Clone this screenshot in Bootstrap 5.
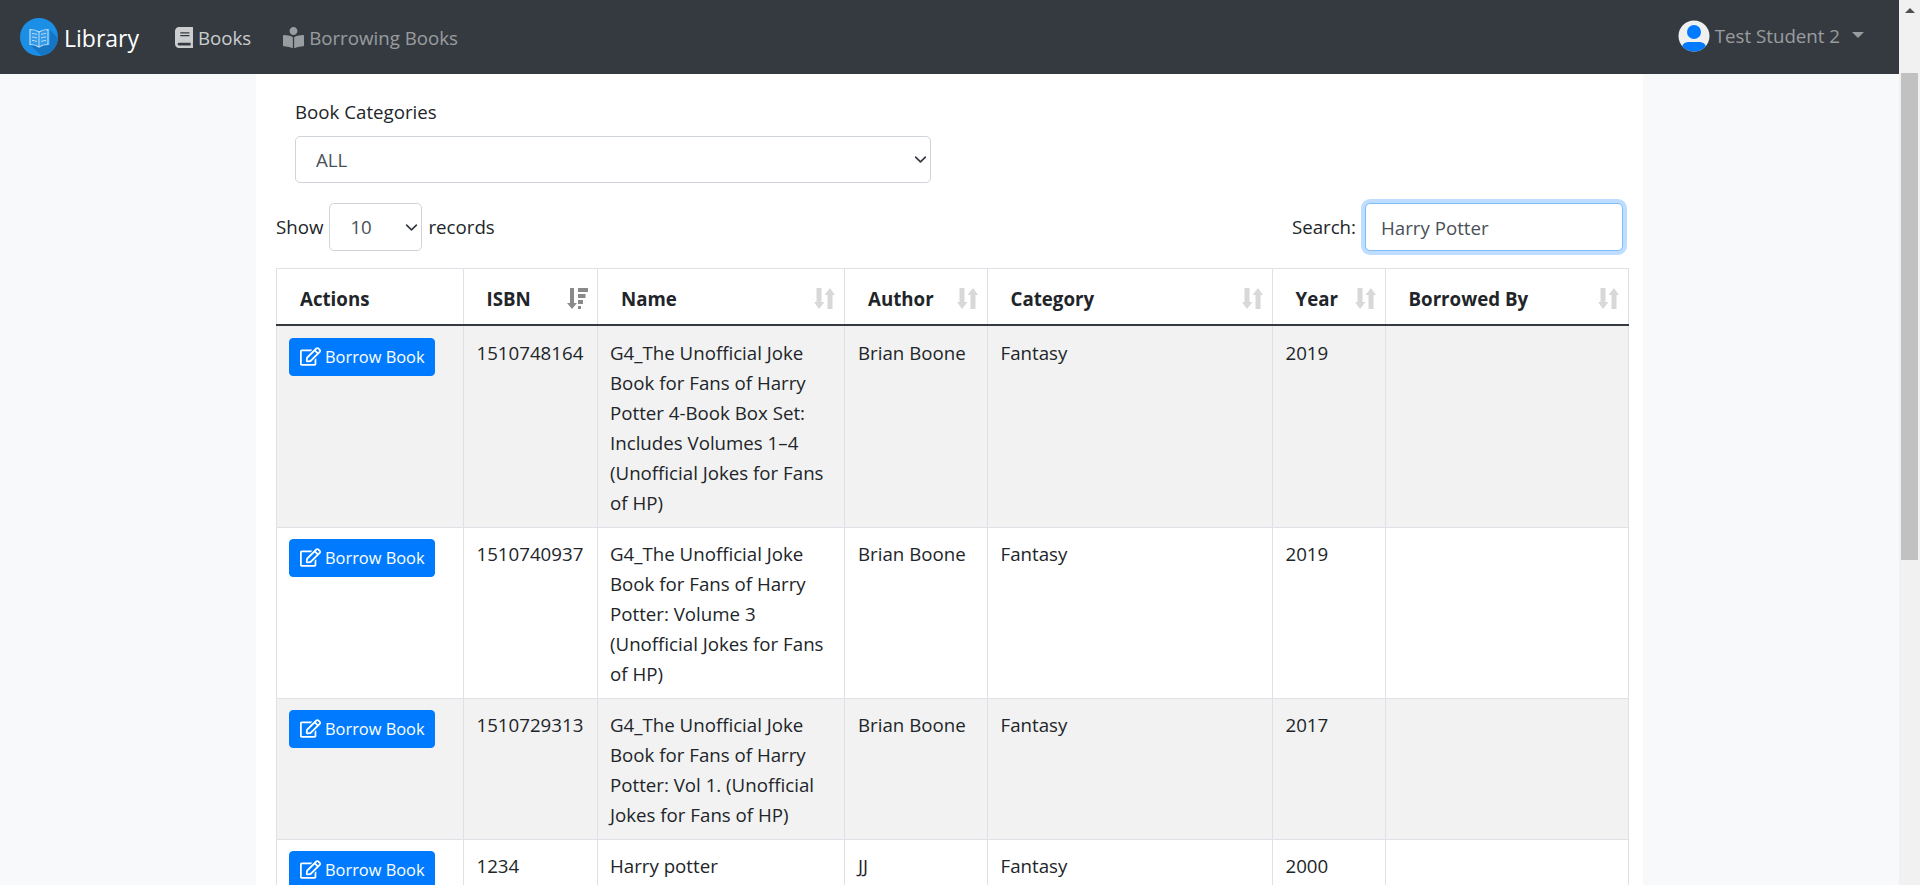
<!DOCTYPE html>
<html>
  <head>
    <title>Library</title>
    <link href="https://cdn.jsdelivr.net/npm/bootstrap@5.3.0/dist/css/bootstrap.min.css" rel="stylesheet">
    <style>
      html { font-size: 20px; }
      body {
        background: #f8f9fa;
        color: #212529;
        font-family: "Open Sans", "Liberation Sans", sans-serif;
        font-size: 18.7px;
        line-height: 30px;
      }
      .app-shell { height: 100vh; overflow: hidden; }
      .app-main { min-width: 0; overflow: hidden; }

      /* navbar */
      .top-bar { background: #343a40; height: 74px; padding: 0 20px; }
      .brand-link { color: #fff; font-size: 23px; text-decoration: none; gap: 6px; margin-right: 35.500px; }
      .top-link { font-size: 18.7px; text-decoration: none; gap: 5px; margin-right: 32px; }
      .top-link.on { color: rgba(255, 255, 255, .75); }
      .top-link.off { color: rgba(255, 255, 255, .5); }
      .nav-txt { margin-top: 2px; }
      .user-link { color: rgba(255, 255, 255, .5); font-size: 18.7px; text-decoration: none; gap: 5px; margin-right: 15px; margin-top: -3px; }
      .user-caret { border-top: 6px solid rgba(255, 255, 255, .5); border-left: 6px solid transparent; border-right: 6px solid transparent; margin-left: 7px; margin-top: -2px; }
      .nav-ico { height: 21px; fill: currentColor; }

      /* page column */
      .page-sheet { background: #fff; width: 1387px; padding: 23px 14px 0 20px; }
      .cat-box { width: 636px; margin-left: 19px; margin-bottom: 20px; }
      .cat-box label { margin-bottom: 9px; display: block; }
      .field-plain {
        color: #495057;
        font-size: 18.7px;
        line-height: 30px;
        height: 47px;
        border-color: #ced4da;
        border-radius: 5px;
        padding-left: 20px;
      }
      .field-plain.form-select { background-size: 17px 13px; background-position: right 1px center; }
      .len-select { width: 93px; height: 48px; margin: 0 6px 0 6px; }
      .search-input {
        width: 258px;
        height: 48px;
        margin-left: 9px;
        margin-right: 6px;
        padding-left: 15px;
        border-color: #80bdff;
        box-shadow: 0 0 0 4px rgba(0, 123, 255, .25);
      }
      .tools-row { margin-bottom: 17px; }

      /* table */
      .books-table { table-layout: fixed; width: 1352px; margin: 0; border-top-width: 2px; }
      .books-table > * > * > * { border-color: #dee2e6; }
      .books-table th {
        font-weight: 700;
        color: #212529;
        padding: 14px 9px 10px 23px;
        border-bottom: 2px solid #343a40;
        height: 56px;
      }
      .books-table td { padding: 10.500px 13px 9.500px; color: #212529; }
      .books-table tbody tr:first-child td { padding-top: 12px; }
      .books-table td:first-child { padding-left: 12px; }
      .books-table td:nth-child(3) { padding-left: 12px; }
      .c-act { width: 186.5px; }
      .c-isbn { width: 134.5px; }
      .c-name { width: 247px; }
      .c-auth { width: 142.5px; }
      .c-cat { width: 285px; }
      .c-year { width: 113px; }
      .c-by { width: 243.5px; }
      .sort-ico { width: 21px; height: 21px; flex: none; }
      .sort-ico.idle { color: #d8d8d8; }
      .sort-ico.act { color: #8a8a8a; }
      .borrow-btn {
        background: #007bff;
        border-color: #007bff;
        color: #fff;
        font-size: 16.4px;
        line-height: 26px;
        padding: 5px 9px 5px 10px;
        border-radius: 4px;
        gap: 4px;
        display: inline-flex;
        align-items: center;
        white-space: nowrap;
      }
      .borrow-btn svg { width: 21px; height: 19px; fill: currentColor; }

      /* painted scrollbar, the shot has a classic one */
      .fake-scroll { width: 21px; flex: none; background: #f1f1f1; padding: 0 2px; }
      .fake-arrow { height: 21px; }
      .fake-arrow i { border-bottom: 5px solid #505050; border-left: 5px solid transparent; border-right: 5px solid transparent; }
      .fake-thumb { background: #c1c1c1; height: 487px; margin-top: 52px; }
    </style>
  </head>
  <body>
    <svg width="0" height="0" class="d-block">
      <symbol id="ico-edit" viewBox="0 0 576 512"><path d="M402.3 344.9l32-32c5-5 13.7-1.5 13.7 5.7V464c0 26.5-21.5 48-48 48H48c-26.5 0-48-21.5-48-48V112c0-26.5 21.5-48 48-48h273.5c7.1 0 10.7 8.6 5.7 13.7l-32 32c-1.5 1.5-3.5 2.3-5.7 2.3H48v352h352V350.5c0-2.1.8-4.1 2.3-5.6zm156.6-201.8L296.3 405.7l-90.4 10c-26.2 2.9-48.5-19.2-45.6-45.6l10-90.4L432.9 17.1c22.9-22.9 59.9-22.9 82.7 0l43.2 43.2c22.9 22.9 22.9 60 .1 82.8zM460.1 174L402 115.9 216.2 301.8l-7.3 65.3 65.3-7.3L460.1 174zm64.8-79.7l-43.2-43.2c-4.1-4.1-10.8-4.1-14.8 0L436 82l58.1 58.1 30.9-30.9c4-4.2 4-10.8-.1-14.9z"/></symbol>
      <symbol id="ico-sort" viewBox="0 0 21 21"><path fill="currentColor" d="M2.500 0h5v14h3L5 21 0 14h2.500zM13.500 21h5V7H21L16 0l-5.500 7h3z"/></symbol>
      <symbol id="ico-sorted" viewBox="0 0 21 21"><path fill="currentColor" d="M3 0h4v15h3L5 21 0 15h3zM11 0h10v4H11zM11 6h7.500v4H11zM11 12h5v4h-5zM11 18h3v3h-3z"/></symbol>
    </svg>

    <div class="app-shell d-flex">
      <div class="app-main flex-grow-1">
        <nav class="top-bar d-flex align-items-center">
          <a class="brand-link d-flex align-items-center" href="#">
            <svg width="38" height="38" viewBox="0 0 38 38">
              <defs><clipPath id="logo-clip"><circle cx="19" cy="19" r="19"/></clipPath></defs>
              <circle cx="19" cy="19" r="19" fill="#1b8fe6"/>
              <path clip-path="url(#logo-clip)" d="M10 27L30 27 30 12 40 22 40 40 24 40z" fill="#1776c4"/>
              <path d="M10 11.500c3.500 0 6.500.7 9 2.500 2.500-1.800 5.500-2.500 9-2.500v15c-3.500 0-6.500.7-9 2.500-2.500-1.800-5.500-2.500-9-2.500z" fill="#2f9bea" stroke="#bcdcf6" stroke-width="1.200"/>
              <path d="M19 14v15M12 15.500c1.700 0 3.400.3 5 1M12 19c1.700 0 3.400.3 5 1M12 22.500c1.700 0 3.400.3 5 1M26 15.500c-1.700 0-3.400.3-5 1M26 19c-1.700 0-3.400.3-5 1M26 22.500c-1.700 0-3.400.3-5 1" fill="none" stroke="#bcdcf6" stroke-width="1"/>
            </svg>
            <span class="nav-txt">Library</span>
          </a>
          <a class="top-link on d-flex align-items-center" href="#">
            <svg class="nav-ico" viewBox="0 0 448 512"><path d="M448 360V24c0-13.300-10.700-24-24-24H96C43 0 0 43 0 96v320c0 53 43 96 96 96h328c13.300 0 24-10.700 24-24v-16c0-7.500-3.500-14.300-8.900-18.700-4.200-15.400-4.200-59.300 0-74.700 5.400-4.300 8.900-11.100 8.900-18.600zM128 134c0-3.300 2.700-6 6-6h212c3.300 0 6 2.700 6 6v20c0 3.300-2.700 6-6 6H134c-3.300 0-6-2.700-6-6v-20zm0 64c0-3.300 2.700-6 6-6h212c3.300 0 6 2.700 6 6v20c0 3.300-2.700 6-6 6H134c-3.300 0-6-2.700-6-6v-20zm253.400 250H96c-17.700 0-32-14.300-32-32 0-17.600 14.400-32 32-32h285.400c-1.900 17.100-1.900 46.900 0 64z"/></svg>
            <span class="nav-txt">Books</span>
          </a>
          <a class="top-link off d-flex align-items-center" href="#">
            <svg class="nav-ico" viewBox="0 0 512 512"><path d="M352 96c0-53.020-42.980-96-96-96s-96 42.980-96 96 42.980 96 96 96 96-42.980 96-96zM233.590 241.100c-59.330-36.320-155.430-46.300-203.790-49.050C13.550 191.130 0 203.510 0 219.140v222.800c0 14.330 11.590 26.280 26.490 27.050 43.660 2.290 131.990 10.680 193.040 41.430 9.370 4.720 20.480-1.710 20.480-11.870V252.560c-.01-4.670-2.320-8.950-6.420-11.460zm248.610-49.050c-48.350 2.740-144.460 12.730-203.780 49.050-4.100 2.510-6.410 6.960-6.410 11.630v245.790c0 10.190 11.140 16.630 20.540 11.900 61.040-30.720 149.320-39.110 192.970-41.400 14.900-.78 26.490-12.730 26.490-27.060V219.140c-.01-15.630-13.560-28.010-29.810-27.090z"/></svg>
            <span class="nav-txt">Borrowing Books</span>
          </a>
          <a class="user-link d-flex align-items-center ms-auto" href="#">
            <svg width="32" height="32" viewBox="0 0 32 32">
              <defs><clipPath id="user-clip"><circle cx="16" cy="16" r="15.500"/></clipPath></defs>
              <circle cx="16" cy="16" r="15.500" fill="#f0f0f0"/>
              <circle cx="16" cy="12" r="7" fill="#007bff"/>
              <path clip-path="url(#user-clip)" d="M4 32v-4c0-4 3-6 7-6h10c4 0 7 2 7 6v4z" fill="#007bff"/>
            </svg>
            Test Student 2
            <span class="user-caret"></span>
          </a>
        </nav>

        <div class="page-sheet mx-auto">
          <div class="cat-box">
            <label for="catSelect">Book Categories</label>
            <select id="catSelect" class="form-select field-plain"><option>ALL</option></select>
          </div>

          <div class="tools-row d-flex align-items-center justify-content-between">
            <div class="d-flex align-items-center">
              Show
              <select class="form-select field-plain len-select"><option>10</option></select>
              records
            </div>
            <div class="d-flex align-items-center">
              Search:
              <input type="text" class="form-control field-plain search-input" value="Harry Potter">
            </div>
          </div>

          <table class="table table-bordered table-striped books-table">
            <colgroup>
              <col class="c-act"><col class="c-isbn"><col class="c-name"><col class="c-auth"><col class="c-cat"><col class="c-year"><col class="c-by">
            </colgroup>
            <thead>
              <tr>
                <th>Actions</th>
                <th><div class="d-flex justify-content-between align-items-center">ISBN <svg class="sort-ico act"><use href="#ico-sorted"/></svg></div></th>
                <th><div class="d-flex justify-content-between align-items-center">Name <svg class="sort-ico idle"><use href="#ico-sort"/></svg></div></th>
                <th><div class="d-flex justify-content-between align-items-center">Author <svg class="sort-ico idle"><use href="#ico-sort"/></svg></div></th>
                <th><div class="d-flex justify-content-between align-items-center">Category <svg class="sort-ico idle"><use href="#ico-sort"/></svg></div></th>
                <th><div class="d-flex justify-content-between align-items-center">Year <svg class="sort-ico idle"><use href="#ico-sort"/></svg></div></th>
                <th><div class="d-flex justify-content-between align-items-center">Borrowed By <svg class="sort-ico idle"><use href="#ico-sort"/></svg></div></th>
              </tr>
            </thead>
            <tbody>
              <tr>
                <td><a class="btn borrow-btn" href="#"><svg><use href="#ico-edit"/></svg>Borrow Book</a></td>
                <td>1510748164</td>
                <td>G4_The Unofficial Joke Book for Fans of Harry Potter 4-Book Box Set: Includes Volumes 1–4 (Unofficial Jokes for Fans of HP)</td>
                <td>Brian Boone</td>
                <td>Fantasy</td>
                <td>2019</td>
                <td></td>
              </tr>
              <tr>
                <td><a class="btn borrow-btn" href="#"><svg><use href="#ico-edit"/></svg>Borrow Book</a></td>
                <td>1510740937</td>
                <td>G4_The Unofficial Joke Book for Fans of Harry Potter: Volume 3 (Unofficial Jokes for Fans of HP)</td>
                <td>Brian Boone</td>
                <td>Fantasy</td>
                <td>2019</td>
                <td></td>
              </tr>
              <tr>
                <td><a class="btn borrow-btn" href="#"><svg><use href="#ico-edit"/></svg>Borrow Book</a></td>
                <td>1510729313</td>
                <td>G4_The Unofficial Joke Book for Fans of Harry Potter: Vol 1. (Unofficial Jokes for Fans of HP)</td>
                <td>Brian Boone</td>
                <td>Fantasy</td>
                <td>2017</td>
                <td></td>
              </tr>
              <tr>
                <td><a class="btn borrow-btn" href="#"><svg><use href="#ico-edit"/></svg>Borrow Book</a></td>
                <td>1234</td>
                <td>Harry potter</td>
                <td>JJ</td>
                <td>Fantasy</td>
                <td>2000</td>
                <td></td>
              </tr>
            </tbody>
          </table>
        </div>
      </div>

      <div class="fake-scroll">
        <div class="fake-arrow d-flex justify-content-center align-items-center"><i></i></div>
        <div class="fake-thumb"></div>
      </div>
    </div>

    <script src="https://cdn.jsdelivr.net/npm/bootstrap@5.3.0/dist/js/bootstrap.bundle.min.js"></script>
  </body>
</html>
